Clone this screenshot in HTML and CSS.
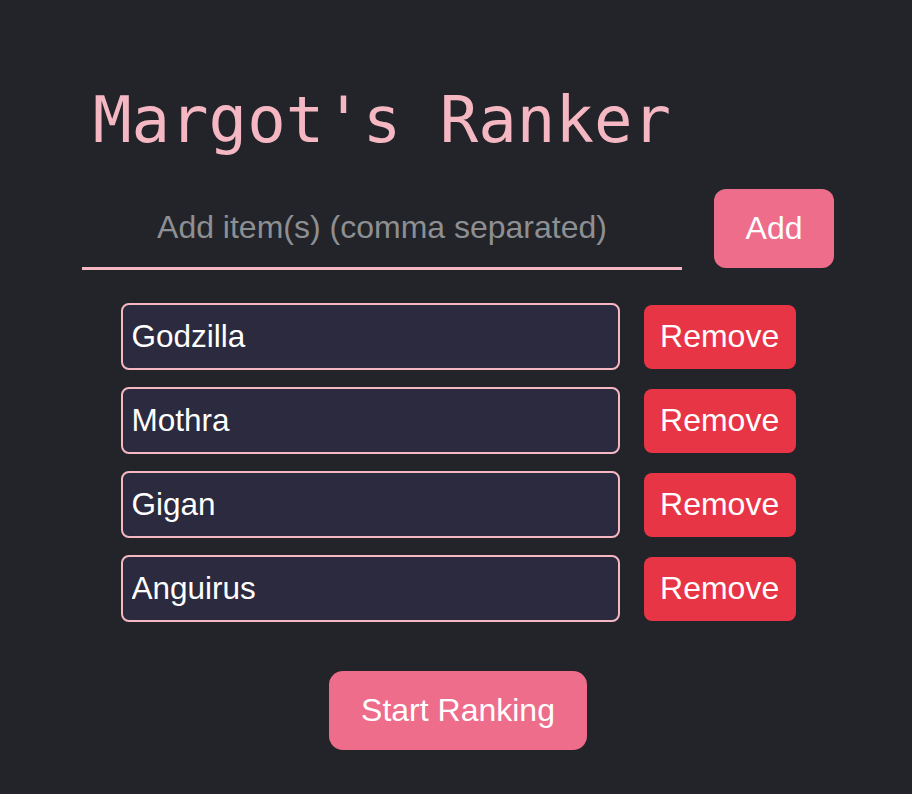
FILE: index.html
```html
<!DOCTYPE html>
<html>
<head>
<meta charset="utf-8">
<link rel="stylesheet" href="styles.css">
</head>
<body>
<div class="app">
  <h1 class="title">Margot's Ranker</h1>
  <div class="add-row">
    <input class="add-input" type="text" placeholder="Add item(s) (comma separated)">
    <button class="btn btn-add">Add</button>
  </div>
  <div class="list">
    <div class="item"><input class="item-input" type="text" value="Godzilla"><button class="btn btn-remove">Remove</button></div>
    <div class="item"><input class="item-input" type="text" value="Mothra"><button class="btn btn-remove">Remove</button></div>
    <div class="item"><input class="item-input" type="text" value="Gigan"><button class="btn btn-remove">Remove</button></div>
    <div class="item"><input class="item-input" type="text" value="Anguirus"><button class="btn btn-remove">Remove</button></div>
  </div>
  <div class="start-row">
    <button class="btn btn-start">Start Ranking</button>
  </div>
</div>
</body>
</html>
```
FILE: styles.css
```css
html, body {
  margin: 0;
  padding: 0;
  background: #222429;
  height: 100%;
}
body {
  font-family: "Liberation Sans", Arial, sans-serif;
  color: #fff;
}
.app {
  width: 752px;
  margin-left: 82px;
  padding-top: 80px;
}
.title {
  margin: 0 0 0 11px;
  font-family: "DejaVu Sans Mono", monospace;
  font-weight: 400;
  font-size: 64px;
  line-height: 80px;
  color: #f5b8c2;
}
.add-row {
  display: flex;
  align-items: flex-start;
  gap: 32px;
  margin-top: 29px;
}
.add-input {
  width: 600px;
  height: 81px;
  box-sizing: border-box;
  background: transparent;
  border: none;
  border-bottom: 3px solid #f5b8c2;
  outline: none;
  text-align: center;
  font-family: "Liberation Sans", Arial, sans-serif;
  font-size: 32px;
  color: #fff;
  padding: 0 0 2px;
}
.add-input::placeholder {
  color: #8e8f93;
}
.btn {
  border: none;
  color: #fff;
  font-family: "Liberation Sans", Arial, sans-serif;
  cursor: pointer;
}
.btn-add {
  width: 120px;
  height: 79px;
  border-radius: 12px;
  background: #ee6d8a;
  font-size: 32px;
}
.list {
  width: 675px;
  margin: 33px auto 0;
  display: flex;
  flex-direction: column;
  gap: 17px;
}
.item {
  display: flex;
  align-items: center;
  gap: 24px;
}
.item-input {
  width: 500px;
  height: 67px;
  box-sizing: border-box;
  background: #2b2a3e;
  border: 2px solid #f5b8c2;
  border-radius: 8px;
  color: #fff;
  font-family: "Liberation Sans", Arial, sans-serif;
  font-size: 31.5px;
  padding: 0 9px;
  outline: none;
}
.btn-remove {
  width: 152px;
  height: 64px;
  border-radius: 8px;
  background: #e83545;
  font-size: 32px;
}
.start-row {
  display: flex;
  justify-content: center;
  margin-top: 49px;
}
.btn-start {
  width: 258px;
  height: 79px;
  border-radius: 14px;
  background: #ee6d8a;
  font-size: 32px;
}
```
